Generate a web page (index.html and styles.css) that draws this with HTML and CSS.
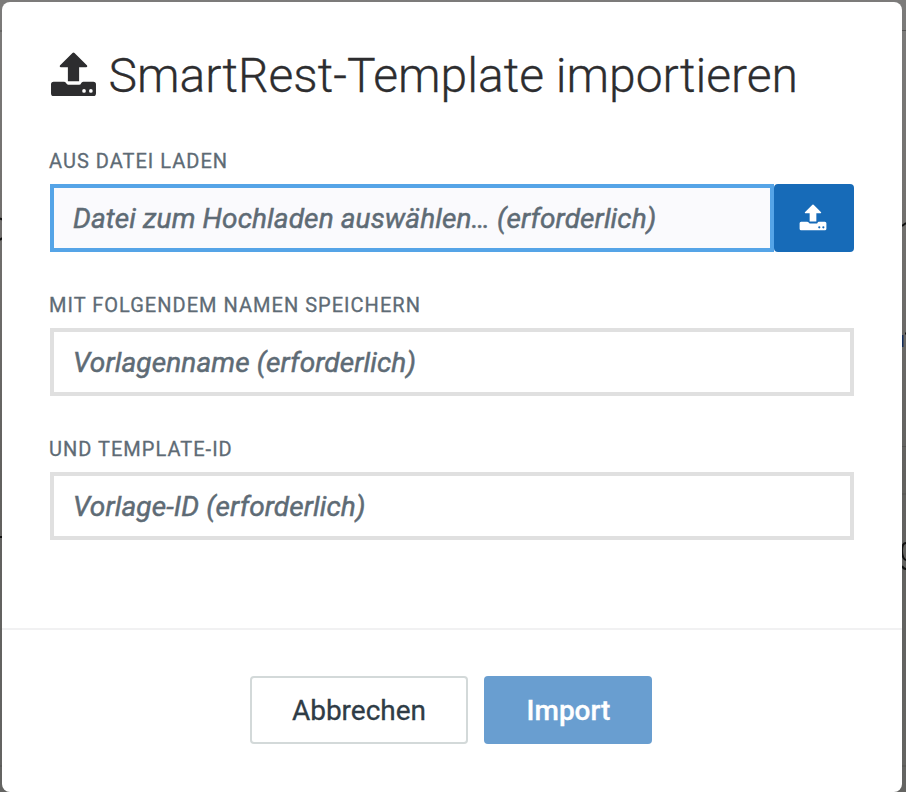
FILE: index.html
```html
<!DOCTYPE html>
<html lang="de">
<head>
<meta charset="utf-8">
<title>SmartRest-Template importieren</title>
<link rel="stylesheet" href="styles.css">
</head>
<body>
<svg class="backdrop" viewBox="0 0 906 792" aria-hidden="true">
  <path class="seam" d="M902 30.5h4M902 446.5h4M902 494h4M902 766h4M0 31h2M0 766h2"/>
  <path class="mark" d="M0 218.5l2 1M0 240l2-2M902 226l4-3M905 333.500h1M0 537h2"/>
  <path class="mark" d="M906 543c-3 0-4 3-4 8s2 9 4 9M902 566c1 2 3 3 4 3"/>
  <path class="link" d="M902.500 335v12"/>
</svg>
<main class="modal">
  <form class="content">
    <h1 class="title">
      <svg class="title-icon" viewBox="0 0 46 44"><use href="#upload"/></svg>
      <span>SmartRest-Template importieren</span>
    </h1>
    <div class="field">
      <label class="label" for="file">AUS DATEI LADEN</label>
      <div class="group">
        <input class="input focused" id="file" placeholder="Datei zum Hochladen auswählen… (erforderlich)">
        <button class="upload" type="button" aria-label="Hochladen"><svg class="upload-icon" viewBox="0 0 46 44"><use href="#upload"/></svg></button>
      </div>
    </div>
    <div class="field">
      <label class="label" for="name">MIT FOLGENDEM NAMEN SPEICHERN</label>
      <input class="input" id="name" placeholder="Vorlagenname (erforderlich)">
    </div>
    <div class="field">
      <label class="label" for="template">UND TEMPLATE-ID</label>
      <input class="input" id="template" placeholder="Vorlage-ID (erforderlich)">
    </div>
  </form>
  <footer class="footer">
    <button class="button cancel" type="button">Abbrechen</button>
    <button class="button import" type="button">Import</button>
  </footer>
</main>
<svg class="symbols" aria-hidden="true">
  <symbol id="upload" viewBox="0 0 46 44">
    <path fill="currentColor" d="M22 1Q23 0 24 1L36.300 13.300Q37 15 35.500 15H28.500V28.500H17.500V15H10.500Q9 15 9.700 13.300Z"/>
    <path fill="currentColor" fill-rule="evenodd" d="M3.500 29H13.500Q15 29 15.500 30T17.500 32H28.500Q30 32 30.500 30.500T32.500 29H42.500Q45 29 45 31.500V40.500Q45 43 42.500 43H3.500Q1 43 1 40.500V31.500Q1 29 3.500 29ZM33.300 36.300a1.800 1.800 0 1 0 0 3.600a1.800 1.800 0 1 0 0-3.600M40 36.300a1.800 1.800 0 1 0 0 3.600a1.800 1.800 0 1 0 0-3.600"/>
  </symbol>
</svg>
</body>
</html>
```
FILE: styles.css
```css
* { box-sizing: border-box; }
html, body { height: 100%; overflow: hidden; }
body {
  margin: 0;
  padding: 2px 4px 0 2px;
  background: linear-gradient(#7c7b7a, #73716f 25%, #62615f 60%, #646462);
  font-family: Roboto, sans-serif;
}
.backdrop { position: absolute; inset: 0; width: 906px; height: 792px; }
.backdrop path { fill: none; }
.seam { stroke: #555453; stroke-width: 1; }
.mark { stroke: #111; stroke-width: 2; }
.link { stroke: #142d5a; stroke-width: 2; }
.symbols { position: absolute; width: 0; height: 0; }
.modal {
  position: relative;
  display: flex;
  flex-direction: column;
  height: 790px;
  background: #fff;
  border-radius: 8px;
}
.content { height: 626px; padding: 43px 48px 0; }
.title {
  display: flex;
  align-items: center;
  height: 62px;
  margin: 0 0 43px;
  color: #2d2d2f;
  font-size: 48px;
  font-weight: 300;
  line-height: 62px;
  white-space: nowrap;
  -webkit-text-stroke: .3px;
}
.title-icon { flex: none; width: 47px; height: 45px; margin: 0 12px 3px -.5px; stroke-width: 0; }
.field { height: 144px; }
.label {
  display: block;
  height: 34px;
  margin-left: -1px;
  color: #5e6b75;
  font-size: 20px;
  line-height: 22px;
  letter-spacing: 1.02px;
  -webkit-text-stroke: .3px;
}
.group { display: flex; }
.input {
  display: block;
  flex: 1;
  width: 100%;
  min-width: 0;
  height: 68px;
  padding: 0 19px;
  border: 4px solid #e0e0e0;
  border-radius: 0;
  outline: 0;
  background: #fff;
  font: italic 400 28px Roboto, sans-serif;
  letter-spacing: .11px;
}
.input::placeholder { color: #5e6b75; opacity: 1; -webkit-text-stroke: .5px; }
.focused { border-color: #55a4e7; background: #fafafd; }
.upload {
  display: flex;
  align-items: center;
  justify-content: center;
  width: 80px;
  height: 68px;
  padding: 0 2px 1px 0;
  border: 0;
  border-radius: 4px;
  background: #176bb8;
  color: #fff;
}
.upload-icon { width: 28px; height: 27px; }
.footer {
  display: flex;
  flex: 1;
  justify-content: center;
  gap: 16px;
  padding: 46px 2px 0 0;
  border-top: 2px solid #f1f1f2;
}
.button {
  height: 68px;
  padding: 0;
  border-radius: 4px;
  font: 400 28px Roboto, sans-serif;
  -webkit-text-stroke: .3px;
}
.cancel { width: 218px; border: 2px solid #d3d9d9; background: #fff; color: #2f3c46; }
.import { width: 168px; padding-left: 1px; border: 0; background: #699ed0; color: #fff; font-weight: 500; }
```
